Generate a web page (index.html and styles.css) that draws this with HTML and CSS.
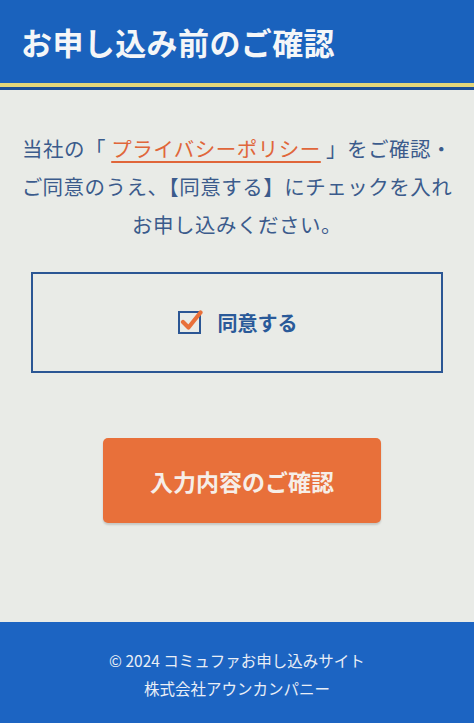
FILE: index.html
```html
<!DOCTYPE html>
<html lang="ja">
<head>
  <meta charset="UTF-8">
  <meta name="viewport" content="width=device-width, initial-scale=1">
  <title>お申し込み前のご確認</title>
  <link rel="stylesheet" href="styles.css">
</head>
<body>

  <header class="page-header">
    <h1>お申し込み前のご確認</h1>
  </header>

  <main class="content">
    <p class="lead">
      当社の「 <a href="#" class="policy-link">プライバシーポリシー</a> 」をご確認・<br>
      ご同意のうえ、【同意する】にチェックを入れ<br>
      お申し込みください。
    </p>

    <!-- Agreement box -->
    <label class="agree-box">
      <span class="check">
        <svg viewBox="0 0 26 26" width="26" height="26">
          <rect x="2" y="4" width="21" height="21" fill="none" stroke="#2b5694" stroke-width="2"/>
          <path d="M6 14 L11.5 19.5 L23.5 4.5" fill="none" stroke="#e8703a" stroke-width="4.2" stroke-linecap="round" stroke-linejoin="round"/>
        </svg>
      </span>
      <span class="agree-text">同意する</span>
    </label>

    <button class="confirm-btn">入力内容のご確認</button>
  </main>

  <footer class="page-footer">
    <p>© 2024 コミュファお申し込みサイト</p>
    <p>株式会社アウンカンパニー</p>
  </footer>

</body>
</html>
```

FILE: styles.css
```css
/* Global */
body {
  margin: 0;
  padding: 0;
  font-family: "Noto Sans CJK JP", "Noto Sans", sans-serif;
  background: #e9ebe7;
  color: #3b5b8c;
}

/* Header */
.page-header {
  background: #1a62bd;
  height: 83px;
  border-bottom: 4px solid #e3d77a;
  box-shadow: 0 3px 0 #1b4f98;
}
.page-header h1 {
  margin: 0;
  padding: 0 0 0 21px;
  line-height: 84px;
  font-size: 31px;
  font-weight: bold;
  color: #f4f6f8;
  letter-spacing: 0.4px;
}

/* Content */
.content {
  height: 535px;
  display: flex;
  flex-direction: column;
  align-items: center;
}

.lead {
  margin: 42px 0 0;
  text-align: center;
  font-size: 20.5px;
  line-height: 38px;
  letter-spacing: 0.5px;
}
.policy-link {
  color: #e0663a;
  text-decoration: underline;
  text-underline-offset: 4px;
  text-decoration-thickness: 2px;
}

/* Agreement box */
.agree-box {
  margin-top: 29px;
  width: 412px;
  height: 101px;
  box-sizing: border-box;
  border: 2px solid #2b5694;
  display: flex;
  align-items: center;
  justify-content: center;
  gap: 15px;
  cursor: pointer;
}
.check {
  display: flex;
  margin-top: -3px;
}
.agree-text {
  font-size: 20px;
  font-weight: bold;
  color: #2a5a99;
}

/* Confirm button */
.confirm-btn {
  margin: 65px 0 0 10px;
  width: 278px;
  height: 85px;
  background: #e8703a;
  border: none;
  border-radius: 5px;
  box-shadow: 0 2px 2px rgba(0, 0, 0, 0.15);
  color: #f6eee8;
  font-family: inherit;
  font-size: 23px;
  font-weight: bold;
  cursor: pointer;
}

/* Footer */
.page-footer {
  background: #1c64c2;
  height: 101px;
  padding-top: 24px;
  box-sizing: border-box;
  text-align: center;
  color: #e9eef6;
  font-size: 15.5px;
}
.page-footer p {
  margin: 0;
  line-height: 28px;
}
```
